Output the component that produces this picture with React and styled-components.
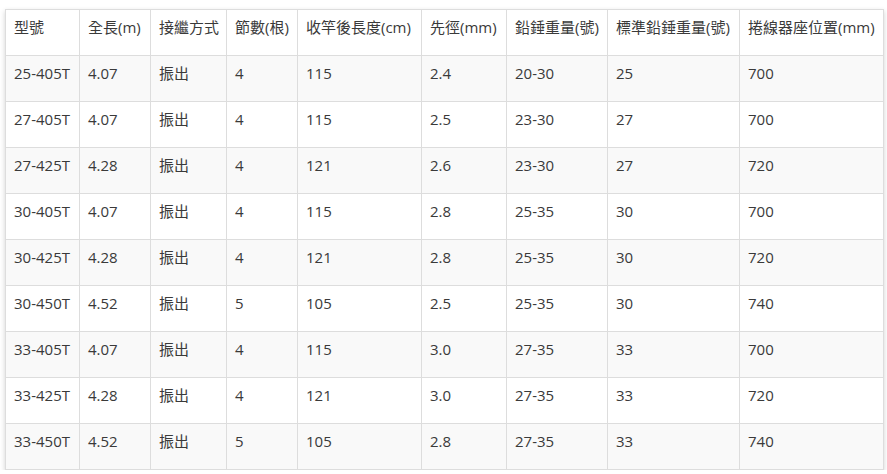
import React from "react";
import styled, { createGlobalStyle } from "styled-components";

const GlobalStyle = createGlobalStyle`
  html, body {
    margin: 0;
    padding: 0;
    background: #fff;
  }
  body {
    font-family: "Open Sans", "Noto Sans CJK TC", sans-serif;
    color: #3a3a3a;
  }
`;

const Wrapper = styled.div`
  padding: 9px 0 0 5px;
`;

const Table = styled.table`
  width: 878px;
  table-layout: fixed;
  border-collapse: collapse;
  font-size: 15px;
  box-shadow: 0 2px 5px rgba(0, 0, 0, 0.18);
  background: #fff;
`;

const Row = styled.tr`
  background: ${({ $shaded }) => ($shaded ? "#f9f9f9" : "#fff")};
`;

const Cell = styled.td`
  border: 1px solid #ddd;
  padding: 7px 4px 18px 8px;
  line-height: 20px;
  vertical-align: top;
  text-align: left;
  font-weight: 400;
  white-space: nowrap;
  overflow: hidden;
`;

const HeadCell = styled(Cell).attrs({ as: "th" })``;

const widths = [74, 71, 76, 71, 124, 85, 101, 132, 144];

const headers = [
  "型號",
  "全長(m)",
  "接繼方式",
  "節數(根)",
  "收竿後長度(cm)",
  "先徑(mm)",
  "鉛錘重量(號)",
  "標準鉛錘重量(號)",
  "捲線器座位置(mm)",
];

const rows = [
  ["25-405T", "4.07", "振出", "4", "115", "2.4", "20-30", "25", "700"],
  ["27-405T", "4.07", "振出", "4", "115", "2.5", "23-30", "27", "700"],
  ["27-425T", "4.28", "振出", "4", "121", "2.6", "23-30", "27", "720"],
  ["30-405T", "4.07", "振出", "4", "115", "2.8", "25-35", "30", "700"],
  ["30-425T", "4.28", "振出", "4", "121", "2.8", "25-35", "30", "720"],
  ["30-450T", "4.52", "振出", "5", "105", "2.5", "25-35", "30", "740"],
  ["33-405T", "4.07", "振出", "4", "115", "3.0", "27-35", "33", "700"],
  ["33-425T", "4.28", "振出", "4", "121", "3.0", "27-35", "33", "720"],
  ["33-450T", "4.52", "振出", "5", "105", "2.8", "27-35", "33", "740"],
];

export default function App() {
  return (
    <>
      <GlobalStyle />
      <Wrapper>
        <Table>
          <colgroup>
            {widths.map((w, i) => (
              <col key={i} style={{ width: w }} />
            ))}
          </colgroup>
          <thead>
            <Row>
              {headers.map((h) => (
                <HeadCell key={h}>{h}</HeadCell>
              ))}
            </Row>
          </thead>
          <tbody>
            {rows.map((r, i) => (
              <Row key={r[0]} $shaded={i % 2 === 0}>
                {r.map((c, j) => (
                  <Cell key={j}>{c}</Cell>
                ))}
              </Row>
            ))}
          </tbody>
        </Table>
      </Wrapper>
    </>
  );
}
